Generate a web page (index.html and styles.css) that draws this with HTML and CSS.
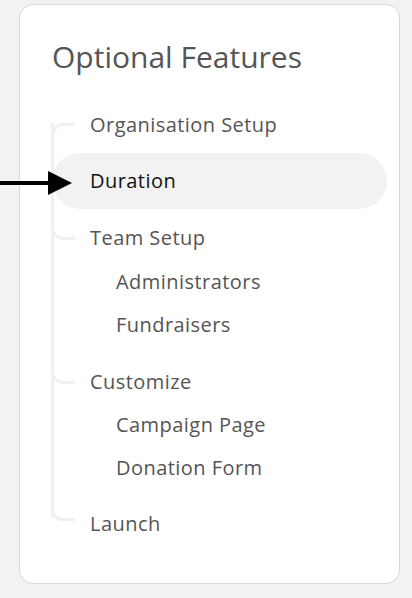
FILE: index.html
```html
<!DOCTYPE html>
<html lang="en">
<head>
<meta charset="UTF-8" />
<meta name="viewport" content="width=device-width, initial-scale=1" />
<title>Optional Features</title>
<link rel="stylesheet" href="styles.css">
</head>
<body>
<main class="page">
  <nav class="steps-card" aria-label="Setup steps">
    <h1>Optional Features</h1>
    <ul class="steps">
      <li class="step step-first"><a href="#">Organisation Setup</a></li>
      <li class="step active">
        <span class="pointer" aria-hidden="true"></span>
        <a href="#" aria-current="step">Duration</a>
      </li>
      <li class="step step-branch has-children">
        <a href="#">Team Setup</a>
        <ul class="substeps">
          <li><a href="#">Administrators</a></li>
          <li><a href="#">Fundraisers</a></li>
        </ul>
      </li>
      <li class="step step-branch has-children">
        <a href="#">Customize</a>
        <ul class="substeps">
          <li><a href="#">Campaign Page</a></li>
          <li><a href="#">Donation Form</a></li>
        </ul>
      </li>
      <li class="step step-branch step-last"><a href="#">Launch</a></li>
    </ul>
  </nav>
</main>
</body>
</html>
```

FILE: styles.css
```css
body {
  margin: 0;
  background: #f2f2f2;
  font-family: "Open Sans", "Noto Sans", sans-serif;
  color: #555;
}
.page {
  padding: 4px 12px 14px 19px;
}
.steps-card {
  background: #fff;
  border: 1px solid #d9d9d9;
  border-radius: 14px;
  padding: 31px 12px 31px 32px;
  height: 580px;
  box-sizing: border-box;
}
h1 {
  margin: 0 0 19px;
  font-size: 30px;
  font-weight: 400;
  line-height: 42px;
  color: #555;
}
.steps, .substeps {
  list-style: none;
  margin: 0;
  padding: 0;
}
.steps {
  position: relative;
}
/* main vertical rail */
.steps::before {
  content: "";
  position: absolute;
  left: -1px;
  top: 26px;
  bottom: 34px;
  width: 3px;
  background: #f0f0f0;
}
.step {
  position: relative;
}
.step a {
  display: block;
  padding: 16px 0 16px 38px;
  line-height: 24px;
  font-size: 20px;
  letter-spacing: 0.45px;
  color: #555;
  text-decoration: none;
}
.step.has-children > a {
  padding-top: 17px;
  padding-bottom: 10px;
}
.substeps {
  padding-bottom: 6.5px;
}
.substeps a {
  padding: 9.5px 0 9.5px 64px;
}
.step.active > a {
  background: #f2f2f2;
  border-radius: 28px;
  color: #111;
}
/* connectors */
.step-first::before,
.step-branch::before {
  content: "";
  position: absolute;
  left: -1px;
  width: 21px;
  height: 12px;
  border: 0 solid #f0f0f0;
  border-left-width: 3px;
}
.step-first::before {
  top: 26px;
  border-top-width: 3px;
  border-top-left-radius: 12px;
}
.step-branch::before {
  top: 16px;
  border-bottom-width: 3px;
  border-bottom-left-radius: 12px;
}
.step-last::before {
  top: 10px;
}
.pointer {
  position: absolute;
  left: -52px;
  top: 28px;
  width: 48px;
  height: 4px;
  background: #000;
}
.pointer::after {
  content: "";
  position: absolute;
  left: 48px;
  top: -10px;
  border-left: 24px solid #000;
  border-top: 12px solid transparent;
  border-bottom: 12px solid transparent;
}
```
